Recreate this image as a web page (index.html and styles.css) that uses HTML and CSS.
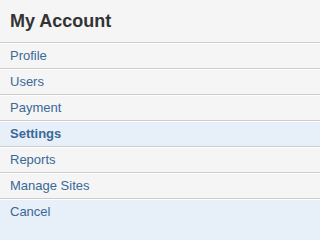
FILE: index.html
```html
<!DOCTYPE html>
<html>
<head>
<meta charset="utf-8">
<link rel="stylesheet" href="styles.css">
</head>
<body>
<nav class="account">
  <h2 class="account-title">My Account</h2>
  <ul class="account-menu">
    <li class="menu-item"><a href="#">Profile</a></li>
    <li class="menu-item"><a href="#">Users</a></li>
    <li class="menu-item"><a href="#">Payment</a></li>
    <li class="menu-item is-active"><a href="#">Settings</a></li>
    <li class="menu-item"><a href="#">Reports</a></li>
    <li class="menu-item"><a href="#">Manage Sites</a></li>
    <li class="menu-item is-cancel"><a href="#">Cancel</a></li>
  </ul>
</nav>
</body>
</html>
```
FILE: styles.css
```css
html, body {
  margin: 0;
  padding: 0;
  background: #f5f5f5;
}
body {
  font-family: "Liberation Sans", Arial, sans-serif;
}
.account {
  width: 100%;
}
.account-title {
  margin: 0;
  padding: 0 10px;
  height: 42px;
  line-height: 42px;
  font-size: 18px;
  font-weight: bold;
  color: #333333;
  border-bottom: 1px solid #cccccc;
}
.account-menu {
  list-style: none;
  margin: 0;
  padding: 0;
}
.menu-item {
  border-top: 1px solid #ffffff;
  border-bottom: 1px solid #cccccc;
}
.menu-item a {
  display: block;
  padding: 0 10px;
  height: 24px;
  line-height: 24px;
  font-size: 13px;
  color: #3a6897;
  text-decoration: none;
}
.is-active a {
  background: #e7eff8;
  font-weight: bold;
}
.is-cancel {
  border-bottom: 0;
}
.is-cancel a {
  height: 40px;
  background: #e7eff8;
}
```
